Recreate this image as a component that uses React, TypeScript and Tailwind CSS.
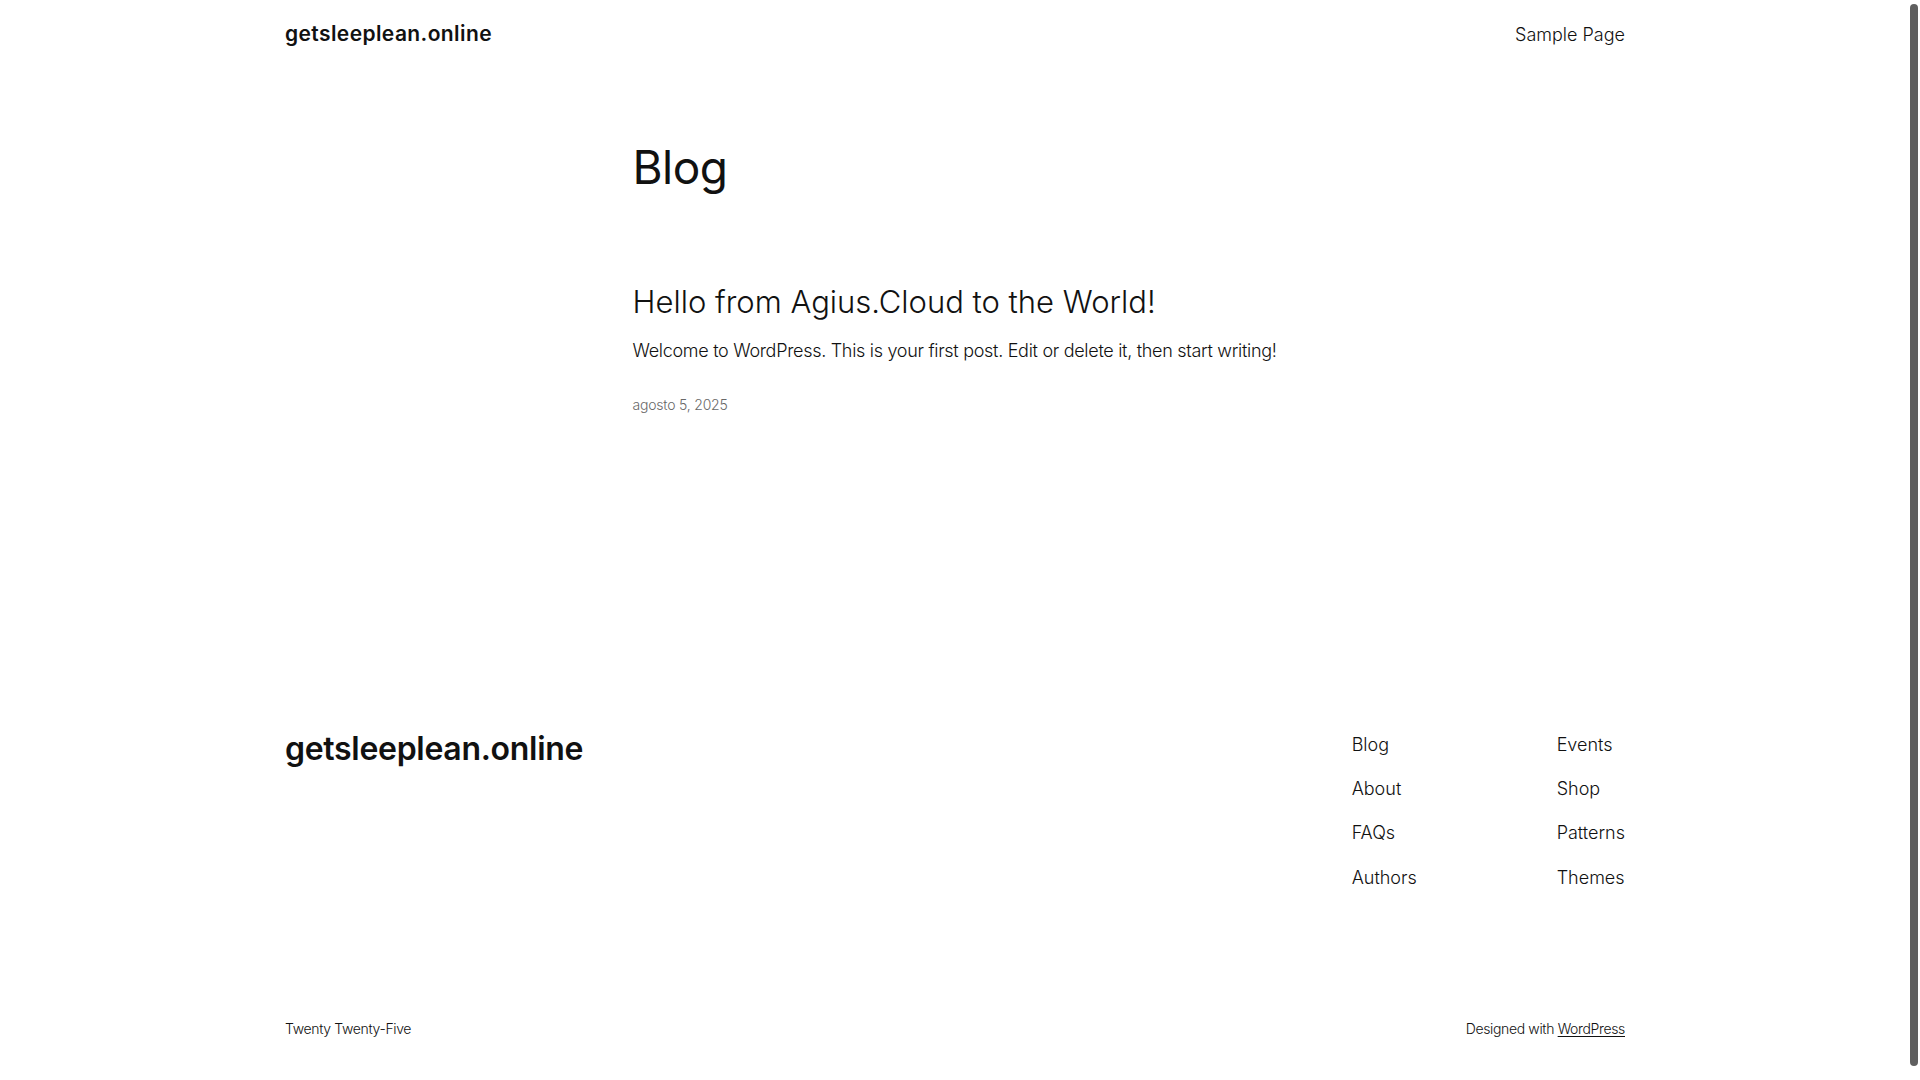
const footerNavLeft = ["Blog", "About", "FAQs", "Authors"];
const footerNavRight = ["Events", "Shop", "Patterns", "Themes"];

function NavColumn({ items }: { items: string[] }) {
  return (
    <ul className="flex flex-col gap-[18.3px]">
      {items.map((item) => (
        <li key={item}>
          <a href="#" className="block text-[18px] leading-[26px] font-light text-[#111111]">
            {item}
          </a>
        </li>
      ))}
    </ul>
  );
}

function Scrollbar() {
  // the reference was shot with the window scrollbar showing
  return (
    <div className="fixed top-0 right-0 flex h-screen w-[15px] justify-end bg-white py-[4px] pr-[2px]">
      <div className="h-[1062px] w-[8px] rounded-full bg-[#5f5f5f]" />
    </div>
  );
}

export default function App() {
  return (
    <div className="min-h-screen bg-white pr-[15px] pl-[5px] text-[#111111] font-['Inter','Liberation_Sans',sans-serif]">
      {/* header */}
      <header className="mx-auto flex h-[68px] max-w-[1340px] items-center justify-between">
        <a href="#" className="text-[21px] font-semibold tracking-[0.4px]">
          getsleeplean.online
        </a>
        <nav>
          <a href="#" className="text-[18px] font-light">
            Sample Page
          </a>
        </nav>
      </header>

      {/* main */}
      <main className="mx-auto max-w-[645px] pt-[71px]">
        <h1 className="text-[46px] leading-[1.25] font-normal tracking-[-0.5px]">Blog</h1>
        <article className="mt-[86px]">
          <h2 className="text-[31px] leading-[1.2] font-light">
            <a href="#">Hello from Agius.Cloud to the World!</a>
          </h2>
          <p className="mt-[17.6px] text-[18px] leading-[1.6] font-light tracking-[-0.3px] whitespace-nowrap">
            Welcome to WordPress. This is your first post. Edit or delete it, then start writing!
          </p>
          <time className="mt-[28.6px] block text-[14px] leading-[20px] font-light tracking-[-0.2px] text-[#686868]">
            agosto 5, 2025
          </time>
        </article>
      </main>

      {/* footer */}
      <footer className="mx-auto mt-[316px] max-w-[1340px] pb-[56px]">
        <div className="flex items-start justify-between">
          <a href="#" className="text-[32px] leading-[36px] font-semibold tracking-[-0.3px]">
            getsleeplean.online
          </a>
          <div className="flex gap-[140px] pt-px">
            <div className="w-[65px]">
              <NavColumn items={footerNavLeft} />
            </div>
            <NavColumn items={footerNavRight} />
          </div>
        </div>
        <div className="mt-[128px] flex items-center justify-between text-[14px] leading-[20px] font-light tracking-[-0.35px]">
          <p>Twenty Twenty-Five</p>
          <p>
            Designed with{" "}
            <a href="#" className="underline underline-offset-2">
              WordPress
            </a>
          </p>
        </div>
      </footer>

      <Scrollbar />
    </div>
  );
}
